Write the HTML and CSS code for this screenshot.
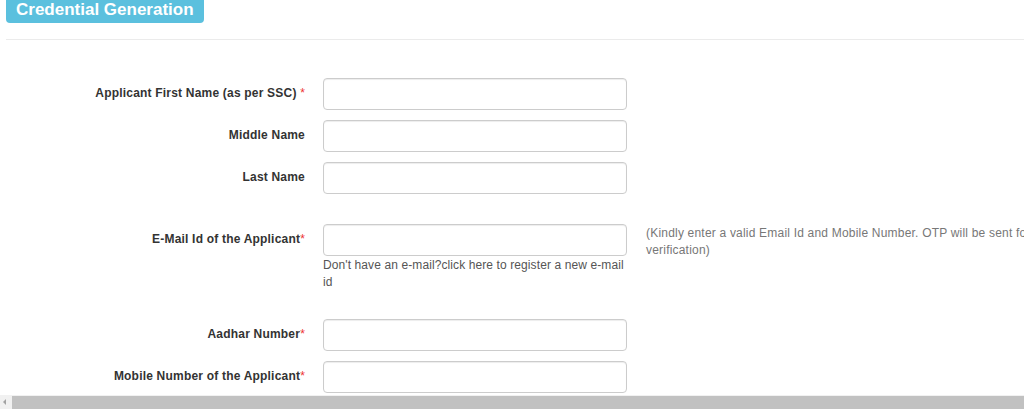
FILE: index.html
```html
<!DOCTYPE html>
<html lang="en">
<head>
    <meta charset="UTF-8">
    <title>Credential Generation</title>
    <meta name="viewport" content="width=device-width, initial-scale=1.0">
    <link rel="stylesheet" href="styles.css">
</head>
<body>

<div class="page">
    <div class="heading">
        <span class="badge">Credential Generation</span>
    </div>
    <hr class="rule">

    <form class="form">
        <div class="row">
            <label class="label">Applicant First Name (as per SSC) <span class="req">*</span></label>
            <div class="field"><input type="text" class="input"></div>
        </div>
        <div class="row">
            <label class="label">Middle Name</label>
            <div class="field"><input type="text" class="input"></div>
        </div>
        <div class="row">
            <label class="label">Last Name</label>
            <div class="field"><input type="text" class="input"></div>
        </div>

        <div class="row row-gap">
            <label class="label">E-Mail Id of the Applicant<span class="req">*</span></label>
            <div class="field">
                <input type="text" class="input">
                <div class="help">Don't have an e-mail?click here to register a new e-mail id</div>
            </div>
            <div class="note">(Kindly enter a valid Email Id and Mobile Number. OTP will be sent for verification)</div>
        </div>

        <div class="row row-after-help">
            <label class="label">Aadhar Number<span class="req">*</span></label>
            <div class="field"><input type="text" class="input"></div>
        </div>
        <div class="row">
            <label class="label">Mobile Number of the Applicant<span class="req">*</span></label>
            <div class="field"><input type="text" class="input"></div>
        </div>
    </form>
</div>

<!-- horizontal scrollbar of the window -->
<div class="hscroll">
    <span class="hscroll-arrow"></span>
    <span class="hscroll-thumb"></span>
</div>

</body>
</html>
```

FILE: styles.css
```css
html, body {
    margin: 0;
    padding: 0;
    overflow: hidden;
    background: #fff;
}

body {
    font-family: "Liberation Sans", Arial, sans-serif;
    font-size: 12px;
    letter-spacing: 0.2px;
    color: #333;
}

.page {
    width: 1100px;
    padding-left: 6px;
}

.heading {
    height: 23px;
}

.badge {
    display: inline-block;
    height: 23px;
    padding: 1px 10px 0;
    background: #5bc0de;
    color: #fff;
    font-size: 17px;
    font-weight: bold;
    letter-spacing: 0;
    line-height: 18px;
    border-radius: 0 0 4px 4px;
    box-sizing: border-box;
}

.rule {
    margin: 16px 0 0;
    border: 0;
    border-top: 1px solid #ebebeb;
}

.form {
    margin-top: 38px;
}

.row {
    display: flex;
    align-items: flex-start;
    margin-bottom: 10px;
}

.row-gap {
    margin-top: 30px;
}

.row-after-help {
    margin-top: 28px;
}

.label {
    width: 299px;
    padding-top: 7px;
    line-height: 17px;
    text-align: right;
    font-weight: bold;
    color: #333;
}

.req {
    color: #e33;
    font-weight: normal;
}

.field {
    width: 304px;
    margin-left: 18px;
}

.input {
    display: block;
    width: 100%;
    height: 32px;
    box-sizing: border-box;
    border: 1px solid #ccc;
    border-radius: 4px;
    background: #fff;
    box-shadow: inset 0 1px 1px rgba(0, 0, 0, 0.075);
    padding: 6px 12px;
    margin: 0;
}

.help {
    margin-top: 1px;
    line-height: 17px;
    letter-spacing: 0.1px;
    color: #555;
}

.note {
    margin-left: 19px;
    width: 440px;
    padding-top: 1px;
    line-height: 17px;
    color: #777;
}

.hscroll {
    position: fixed;
    left: 0;
    right: 0;
    bottom: 0;
    height: 14px;
    background: #f1f1f1;
    display: flex;
    align-items: flex-end;
}

.hscroll-arrow {
    width: 0;
    height: 0;
    margin: 0 4px 4px 3px;
    border-top: 3px solid transparent;
    border-bottom: 3px solid transparent;
    border-right: 3px solid #a3a3a3;
}

.hscroll-thumb {
    flex: 1;
    height: 13px;
    margin-left: 2px;
    background: #c1c1c1;
}
```
